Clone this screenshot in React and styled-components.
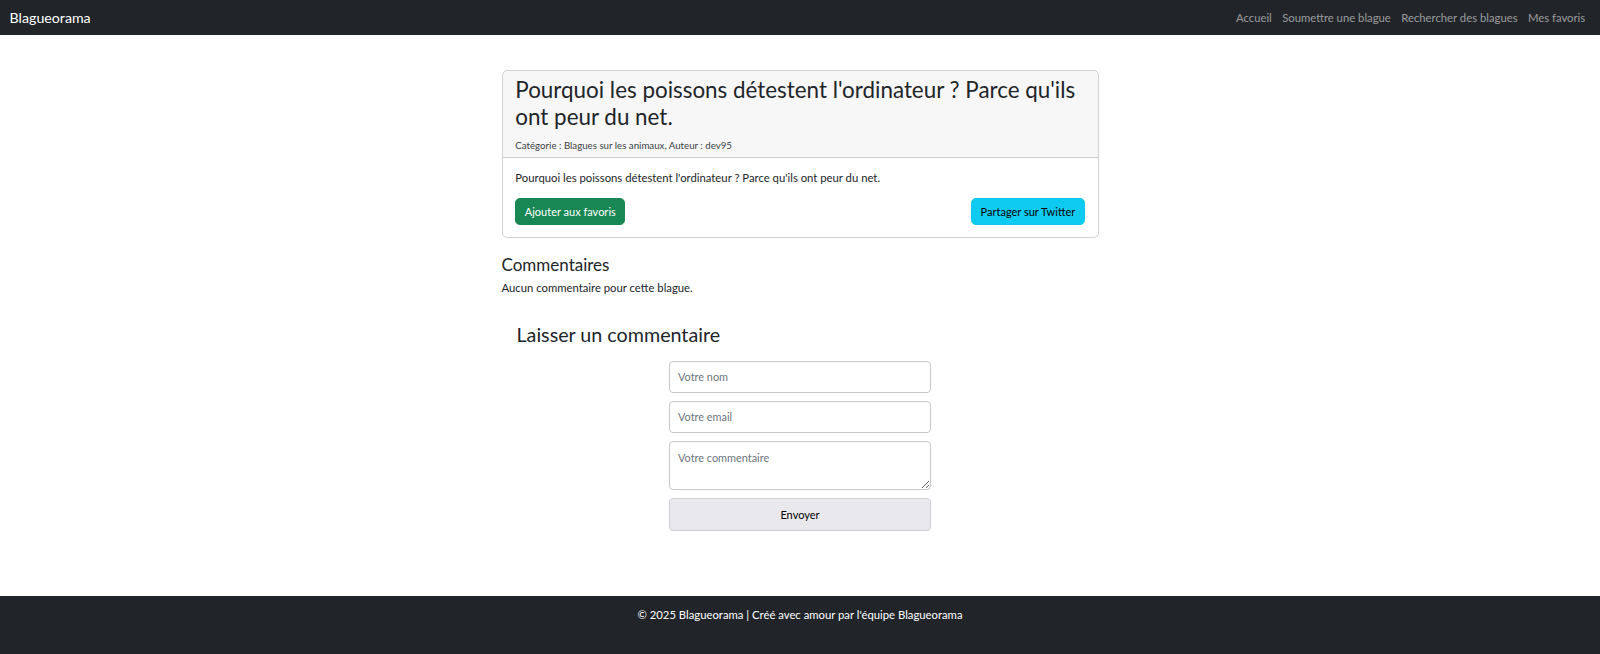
import styled, { createGlobalStyle } from "styled-components";

const GlobalStyle = createGlobalStyle`
  body {
    margin: 0;
    font-family: Lato, "Noto Sans", sans-serif;
    font-size: 11.3px;
    line-height: 19.2px;
    color: #212529;
    background: #fff;
  }
  * {
    box-sizing: border-box;
  }
`;

const liens = [
  "Accueil",
  "Soumettre une blague",
  "Rechercher des blagues",
  "Mes favoris",
];

export default function App() {
  return (
    <Page>
      <GlobalStyle />
      <Navbar>
        <Brand href="#">Blagueorama</Brand>
        <NavList>
          {liens.map((l) => (
            <NavLink key={l} href="#">
              {l}
            </NavLink>
          ))}
        </NavList>
      </Navbar>

      <Main>
        <Card>
          <CardHeader>
            <Titre>
              Pourquoi les poissons détestent l'ordinateur ? Parce qu'ils ont
              peur du net.
            </Titre>
            <Meta>Catégorie : Blagues sur les animaux, Auteur : dev95</Meta>
          </CardHeader>
          <CardBody>
            <Texte>
              Pourquoi les poissons détestent l'ordinateur ? Parce qu'ils ont
              peur du net.
            </Texte>
            <Actions>
              <Btn $bg="#198754" $color="#fff">
                Ajouter aux favoris
              </Btn>
              <Btn $bg="#0dcaf0" $color="#000">
                Partager sur Twitter
              </Btn>
            </Actions>
          </CardBody>
        </Card>

        <Section>
          <SousTitre>Commentaires</SousTitre>
          <Vide>Aucun commentaire pour cette blague.</Vide>
        </Section>

        <FormZone>
          <FormTitre>Laisser un commentaire</FormTitre>
          <Formulaire onSubmit={(e) => e.preventDefault()}>
            <Champ type="text" placeholder="Votre nom" />
            <Champ type="email" placeholder="Votre email" />
            <Zone placeholder="Votre commentaire" />
            <Envoyer type="submit">Envoyer</Envoyer>
          </Formulaire>
        </FormZone>
      </Main>

      <Footer>
        © 2025 Blagueorama | Créé avec amour par l'équipe Blagueorama
      </Footer>
    </Page>
  );
}

const Page = styled.div`
  min-height: 100vh;
  display: flex;
  flex-direction: column;
`;

const Navbar = styled.nav`
  height: 35px;
  background: #212529;
  display: flex;
  align-items: center;
  justify-content: space-between;
  padding: 0 9.6px;
`;

const Brand = styled.a`
  color: #fff;
  font-size: 14.2px;
  text-decoration: none;
`;

const NavList = styled.div`
  display: flex;
`;

const NavLink = styled.a`
  color: rgba(255, 255, 255, 0.55);
  text-decoration: none;
  padding: 0 5.2px;
  font-size: 11.3px;
`;

const Main = styled.main`
  width: 597px;
  margin: 35px auto 0;
  flex: 1;
`;

const Card = styled.div`
  border: 1px solid rgba(0, 0, 0, 0.175);
  border-radius: 5px;
  overflow: hidden;
`;

const CardHeader = styled.div`
  background: rgba(0, 0, 0, 0.03);
  border-bottom: 1px solid rgba(0, 0, 0, 0.175);
  padding: 6.4px 12.8px 3.5px;
`;

const Titre = styled.h3`
  margin: 0 0 6px;
  font-size: 22.4px;
  font-weight: 400;
  line-height: 1.2;
`;

const Meta = styled.small`
  display: block;
  font-size: 9.7px;
  line-height: 16.8px;
  color: #3a3f44;
`;

const CardBody = styled.div`
  padding: 10px 12.8px 12px;
`;

const Texte = styled.p`
  margin: 0 0 10px;
`;

const Actions = styled.div`
  display: flex;
  justify-content: space-between;
`;

const Btn = styled.button`
  background: ${({ $bg }) => $bg};
  color: ${({ $color }) => $color};
  border: 1px solid ${({ $bg }) => $bg};
  border-radius: 4.8px;
  font: inherit;
  font-size: 11px;
  height: 27px;
  padding: 0 8.5px;
  cursor: pointer;
`;

const Section = styled.section`
  margin-top: 15px;
`;

const SousTitre = styled.h4`
  margin: 0 0 2px;
  font-size: 17px;
  font-weight: 400;
  line-height: 23px;
`;

const Vide = styled.p`
  margin: 0;
`;

const FormZone = styled.section`
  margin-top: 25px;
  padding: 0 15px;
`;

const FormTitre = styled.h3`
  margin: 0 0 14px;
  font-size: 19.7px;
  font-weight: 400;
  line-height: 25px;
`;

const Formulaire = styled.form`
  width: 262px;
  margin: 0 auto;
  display: flex;
  flex-direction: column;
  gap: 8px;
`;

const Champ = styled.input`
  height: 32px;
  border: 1px solid #c8c8c8;
  border-radius: 4px;
  padding: 0 8px;
  font: inherit;
  font-size: 10.9px;
  color: #212529;
  &::placeholder {
    color: #6c757d;
  }
`;

const Zone = styled.textarea`
  height: 49px;
  border: 1px solid #c8c8c8;
  border-radius: 4px;
  padding: 6px 8px;
  font: inherit;
  font-size: 10.9px;
  &::placeholder {
    color: #6c757d;
  }
`;

const Envoyer = styled.button`
  height: 33px;
  background: #e9e9ed;
  border: 1px solid #cfcfd6;
  border-radius: 4px;
  font: inherit;
  font-size: 11px;
  color: #000;
`;

const Footer = styled.footer`
  background: #212529;
  color: #fff;
  text-align: center;
  padding: 9.6px 0 30px;
  margin-top: 65px;
  font-size: 11.3px;
  line-height: 19px;
`;
